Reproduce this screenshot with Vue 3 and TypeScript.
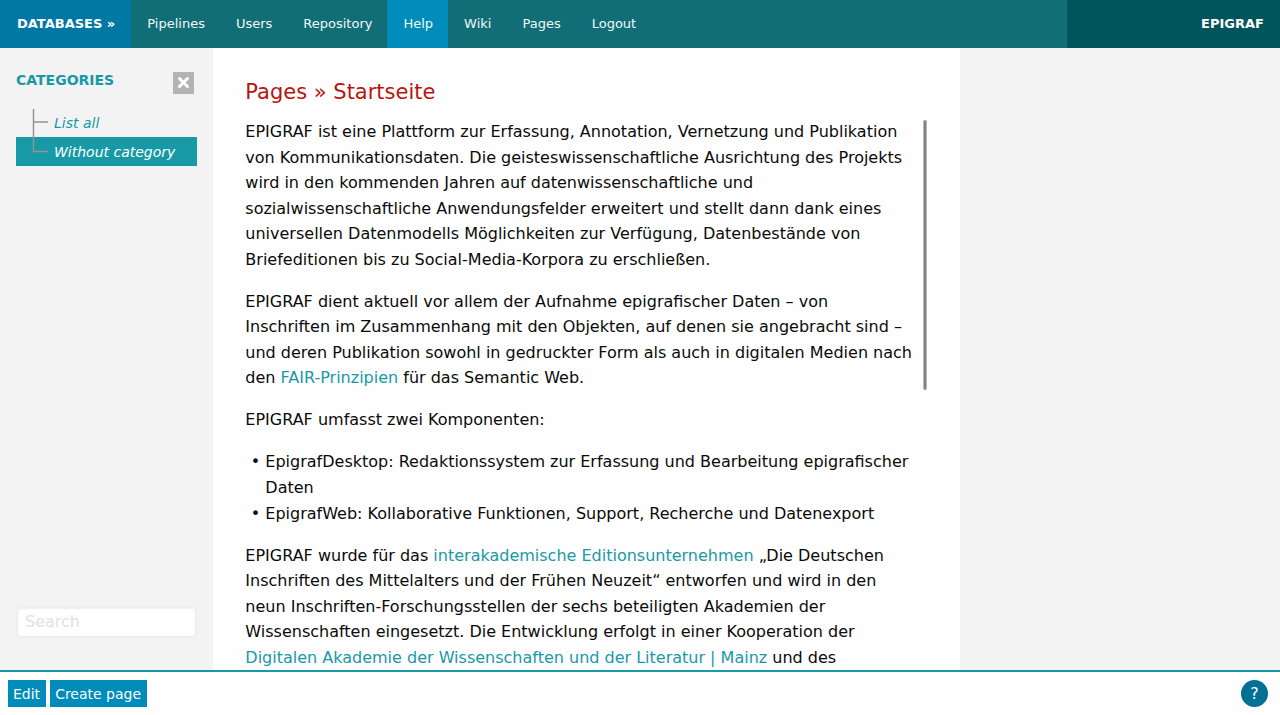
<script setup lang="ts">
import { ref } from 'vue'

interface NavItem {
  label: string
  active?: boolean
}

const navItems: NavItem[] = [
  { label: 'Pipelines' },
  { label: 'Users' },
  { label: 'Repository' },
  { label: 'Help', active: true },
  { label: 'Wiki' },
  { label: 'Pages' },
  { label: 'Logout' },
]

const categories = ['List all', 'Without category']
const selected = ref('Without category')
const sidebarOpen = ref(true)
const search = ref('')
</script>

<template>
  <div class="page">
    <header class="topbar">
      <nav class="menu" aria-label="Main">
        <a href="#" class="menu-item databases">DATABASES »</a>
        <a
          v-for="item in navItems"
          :key="item.label"
          href="#"
          class="menu-item"
          :class="{ active: item.active }"
        >{{ item.label }}</a>
      </nav>
      <a href="#" class="brand">EPIGRAF</a>
    </header>

    <div class="columns">
      <aside class="sidebar">
        <template v-if="sidebarOpen">
          <div class="sidebar-head">
            <h2>CATEGORIES</h2>
            <button class="close" type="button" aria-label="Close" @click="sidebarOpen = false">
              <svg viewBox="0 0 21 22" width="21" height="22" aria-hidden="true">
                <path d="M6.5 6.5 L14.5 14.5 M14.5 6.5 L6.5 14.5" />
              </svg>
            </button>
          </div>
          <ul class="tree">
            <li v-for="(name, i) in categories" :key="name" :class="{ selected: name === selected }">
              <svg class="branch" viewBox="0 0 38 29" width="38" height="29" aria-hidden="true">
                <path v-if="i < categories.length - 1" d="M17.5 1 V29 M17 14 H32" />
                <path v-else d="M17.5 0 V14.5 H32" />
              </svg>
              <a href="#" @click.prevent="selected = name">{{ name }}</a>
            </li>
          </ul>
          <input v-model="search" class="search" type="text" placeholder="Search" aria-label="Search" />
        </template>
      </aside>

      <main class="content">
        <h1>Pages » Startseite</h1>
        <div class="scroll-frame">
          <div class="scroller">
            <p>
              EPIGRAF ist eine Plattform zur Erfassung, Annotation, Vernetzung und Publikation von
              Kommunikationsdaten. Die geisteswissenschaftliche Ausrichtung des Projekts wird in den
              kommenden Jahren auf datenwissenschaftliche und sozialwissenschaftliche
              Anwendungsfelder erweitert und stellt dann dank eines universellen Datenmodells
              Möglichkeiten zur Verfügung, Datenbestände von Briefeditionen bis zu
              Social-Media-Korpora zu erschließen.
            </p>
            <p>
              EPIGRAF dient aktuell vor allem der Aufnahme epigrafischer Daten – von Inschriften im
              Zusammenhang mit den Objekten, auf denen sie angebracht sind – und deren Publikation
              sowohl in gedruckter Form als auch in digitalen Medien nach den
              <a href="#">FAIR-Prinzipien</a> für das Semantic Web.
            </p>
            <p>EPIGRAF umfasst zwei Komponenten:</p>
            <ul>
              <li>EpigrafDesktop: Redaktionssystem zur Erfassung und Bearbeitung epigrafischer Daten</li>
              <li>EpigrafWeb: Kollaborative Funktionen, Support, Recherche und Datenexport</li>
            </ul>
            <p>
              EPIGRAF wurde für das <a href="#">interakademische Editionsunternehmen</a> „Die
              Deutschen Inschriften des Mittelalters und der Frühen Neuzeit“ entworfen und wird in
              den neun Inschriften-Forschungsstellen der sechs beteiligten Akademien der
              Wissenschaften eingesetzt. Die Entwicklung erfolgt in einer Kooperation der
              <a href="#">Digitalen Akademie der Wissenschaften und der Literatur | Mainz</a> und des
            </p>
          </div>
          <div class="thumb"></div>
        </div>
      </main>
    </div>

    <footer class="bottombar">
      <button type="button" class="action">Edit</button>
      <button type="button" class="action">Create page</button>
      <button type="button" class="help" aria-label="Help">?</button>
    </footer>
  </div>
</template>

<style>
body {
  margin: 0;
}
</style>

<style scoped>
* {
  box-sizing: border-box;
}

.page {
  display: flex;
  flex-direction: column;
  height: 100vh;
  overflow: hidden;
  background: #fefefe;
  color: #0a0a0a;
  font-family: "DejaVu Sans", sans-serif;
  font-size: 16px;
  line-height: 1.6;
}

a {
  color: #1899a6;
  text-decoration: none;
}

button,
input {
  font-family: inherit;
}

.topbar {
  display: grid;
  grid-template-columns: 10fr 2fr;
  flex: none;
  height: 48px;
  font-size: 13px;
  line-height: 48px;
}

.menu {
  display: flex;
  background: #126e76;
}

.menu-item {
  padding: 0 15px 0 16px;
  color: #f0f8f8;
}

.menu-item.databases {
  padding: 0 16px 0 17px;
  background: #0078a4;
  color: #fff;
  font-weight: bold;
}

.menu-item.active {
  background: #008cba;
}

.brand {
  padding-right: 16px;
  background: #00545c;
  color: #fff;
  font-weight: bold;
  text-align: right;
}

.columns {
  display: grid;
  grid-template-columns: 2fr 7fr 3fr;
  flex: 1;
  min-height: 0;
  background: #f3f3f3;
}

.sidebar {
  display: flex;
  flex-direction: column;
  min-height: 0;
  padding: 24px 16px 32px;
}

.sidebar-head {
  display: flex;
  justify-content: space-between;
  padding-right: 3px;
}

.sidebar-head h2 {
  margin: 0;
  color: #1899a6;
  font-size: 14px;
  line-height: 16px;
}

.close {
  display: block;
  width: 21px;
  height: 22px;
  padding: 0;
  border: 0;
  background: #b3b3b3;
}

.close svg {
  display: block;
}

.close path {
  fill: none;
  stroke: #fff;
  stroke-width: 3;
  stroke-linecap: round;
}

.tree {
  margin: 14px 0 0;
  padding: 0;
  list-style: none;
  font-size: 14px;
  font-style: italic;
  line-height: 31px;
}

.tree li {
  display: flex;
  height: 29px;
}

.tree .selected {
  background: #1899a6;
}

.tree .selected a {
  color: #fff;
}

.branch {
  display: block;
}

.branch path {
  fill: none;
  stroke: #949494;
  stroke-width: 1.5;
}

.search {
  width: 100%;
  height: 32px;
  margin-top: auto;
  padding: 0 7px 2px;
  border: 2px solid #efefef;
  border-radius: 5px;
  background: #fefefe;
  box-shadow: inset 0 1px 2px rgba(10, 10, 10, 0.06);
  color: #0a0a0a;
  font-size: 16px;
}

.search::placeholder {
  color: #e2e2e2;
  opacity: 1;
}

.content {
  display: flex;
  flex-direction: column;
  min-height: 0;
  padding: 28px 32px 0;
  background: #fefefe;
}

h1 {
  margin: 0 0 11px;
  color: #b9140e;
  font-size: 21px;
  font-weight: normal;
  line-height: 32px;
}

.scroll-frame {
  position: relative;
  flex: 1;
  min-height: 0;
}

.scroller {
  height: 100%;
  padding-right: 16px;
  overflow-y: auto;
  scrollbar-width: none;
}

.scroller p,
.scroller ul {
  margin: 0 0 16px;
}

.scroller ul {
  padding-left: 20px;
  line-height: 26px;
  list-style-type: "•\00a0";
}

.thumb {
  position: absolute;
  top: 1px;
  right: 1px;
  width: 4px;
  height: 49%;
  border: 1px solid #b4b8b8;
  border-width: 0 1px;
  border-radius: 2px;
  background: #808484;
}

.bottombar {
  display: flex;
  align-items: flex-start;
  flex: none;
  gap: 4px;
  padding: 8px 12px 8px 8px;
  border-top: 2px solid #1899a6;
  background: #fefefe;
}

.action {
  height: 27px;
  padding: 0 6px 0 5px;
  border: 0;
  background: #008cba;
  color: #fefefe;
  font-size: 14px;
}

.help {
  width: 27px;
  height: 27px;
  margin-left: auto;
  padding: 0;
  border: 0;
  border-radius: 50%;
  background: #007095;
  color: #fefefe;
  font-size: 16px;
}
</style>
